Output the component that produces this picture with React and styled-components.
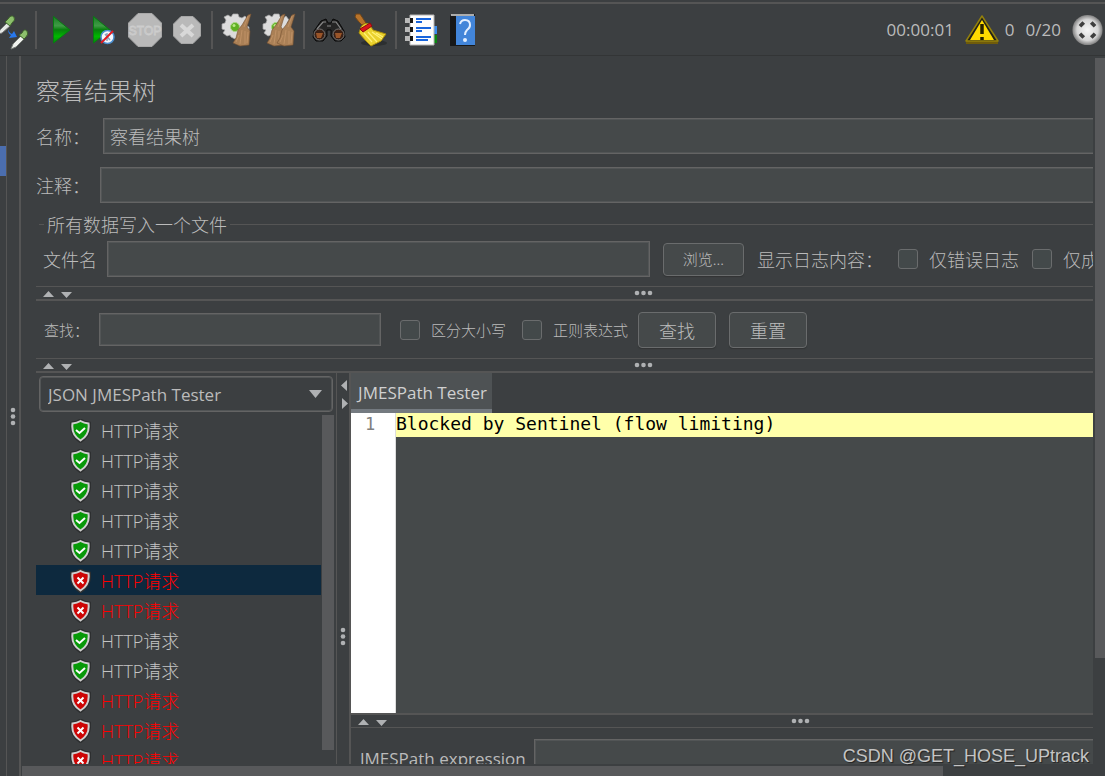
import React from 'react';
import styled, { createGlobalStyle, css } from 'styled-components';

const c = {
  bg: '#3c3f41',
  field: '#45494a',
  line: '#555555',
  border: '#646464',
  text: '#bbbbbb',
  icon: '#afb1b3',
  thumb: '#58595b',
};

const GlobalStyle = createGlobalStyle`
  *, *::before, *::after { box-sizing: border-box; }
  body {
    margin: 0;
    background: ${c.bg};
    color: ${c.text};
    font-family: 'Open Sans', 'Noto Sans CJK SC', sans-serif;
    font-size: 17px;
    line-height: 24px;
  }
  button, input, select { font: inherit; color: inherit; }
`;

const cjk = css`
  font-family: 'Noto Sans CJK SC', sans-serif;
  font-weight: 300;
`;

const Window = styled.div`
  position: relative;
  display: flex;
  flex-direction: column;
  height: 100vh;
  overflow: hidden;
`;

const Toolbar = styled.header`
  display: flex;
  align-items: center;
  flex: none;
  height: 54px;
  margin-top: 2px;
  border-top: 2px solid ${c.line};
  border-bottom: 1px solid #333536;
`;

const ToolButton = styled.button`
  display: flex;
  flex: none;
  align-items: center;
  justify-content: center;
  width: ${(p) => p.$width || 42}px;
  height: 38px;
  padding: 0;
  border: 0;
  background: none;
  svg { display: block; overflow: visible; }
`;

const Separator = styled.div`
  flex: none;
  width: 2px;
  height: 38px;
  margin: 0 3px;
  background: ${c.line};
`;

const Status = styled.div`
  display: flex;
  align-items: center;
  gap: 11px;
  margin-left: auto;
  padding-right: 2px;
`;

const StatusIcon = styled.span`
  display: flex;
  margin-right: ${(p) => p.$tight ? '-5px' : '0'};
`;

const Body = styled.div`
  display: flex;
  flex: 1;
  min-height: 0;
`;

const TreeEdge = styled.aside`
  flex: none;
  width: 7px;
  padding-top: 90px;
  border-right: 1px solid ${c.line};
`;

const TreeEdgeSelection = styled.div`
  height: 30px;
  background: #4b6eaf;
`;

const VSplitter = styled.div`
  position: relative;
  display: flex;
  flex: none;
  flex-direction: column;
  align-items: center;
  justify-content: center;
  width: 14px;
  border-right: 2px solid ${c.line};
`;

const InnerVSplitter = styled(VSplitter)`
  width: 15px;
  border-left: 1px solid ${c.line};
`;

const HSplitter = styled.div`
  position: relative;
  display: flex;
  flex: none;
  align-items: center;
  justify-content: center;
  height: 15px;
  border-top: ${(p) => (p.$flip ? 2 : 1)}px solid ${c.line};
  border-bottom: ${(p) => (p.$flip ? 1 : 2)}px solid ${c.line};
`;

const SplitArrows = styled.svg`
  position: absolute;
  left: ${(p) => (p.$vertical ? 2 : 7)}px;
  top: ${(p) => (p.$vertical ? 6 : 3)}px;
  fill: ${c.icon};
`;

const Dots = styled.svg`
  flex: none;
  fill: ${c.icon};
`;

const Viewport = styled.div`
  display: grid;
  grid-template-columns: minmax(0, 1fr) 10px;
  grid-template-rows: minmax(0, 1fr) 10px;
  gap: 2px;
  flex: 1;
  min-width: 0;
`;

const Clip = styled.main`
  overflow: hidden;
  padding-left: 15px;
`;

const Canvas = styled.div`
  display: flex;
  flex-direction: column;
  width: calc(100% + 157px);
  height: calc(100% + 136px);
`;

const ScrollTrack = styled.div`
  padding: ${(p) => (p.$horizontal ? '0 0 0 1px' : '2px 0 0')};
`;

const ScrollThumb = styled.div`
  width: ${(p) => p.$width || '100%'};
  height: ${(p) => p.$height || '100%'};
  background: ${c.thumb};
`;

const Title = styled.h1`
  ${cjk}
  margin: 16px 0 10px;
  font-size: 24px;
  line-height: 36px;
`;

const FormRow = styled.div`
  ${cjk}
  display: flex;
  align-items: center;
  flex: none;
  gap: ${(p) => p.$gap || 0}px;
  height: 36px;
  margin-bottom: ${(p) => p.$below || 0}px;
  padding: ${(p) => p.$padding || '0'};
  font-size: 18px;
`;

const Label = styled.label`
  flex: none;
  width: ${(p) => (p.$width ? `${p.$width}px` : 'auto')};
  white-space: nowrap;
`;

const TextField = styled.input`
  flex: ${(p) => (p.$width ? 'none' : 1)};
  width: ${(p) => p.$width || 0}px;
  min-width: 0;
  height: ${(p) => p.$height || 36}px;
  padding: 0 6px;
  border: 1px solid ${c.border};
  box-shadow: inset 0 0 0 1px #525556;
  border-radius: 0;
  background: ${c.field};
  outline: none;
`;

const Group = styled.fieldset`
  flex: none;
  min-width: 0;
  margin: 0;
  padding: 0;
  border: 0;
`;

const Legend = styled.legend`
  ${cjk}
  display: flex;
  align-items: center;
  gap: 3px;
  width: 100%;
  padding: 0 0 0 3px;
  font-size: 18px;
  line-height: 34px;
  &::before, &::after {
    content: '';
    width: 5px;
    height: 1px;
    background: ${c.line};
  }
  &::after { flex: 1; }
`;

const Button = styled.button`
  ${cjk}
  flex: none;
  width: ${(p) => p.$width}px;
  height: ${(p) => p.$height}px;
  padding: 0;
  border: 1px solid #6a6c6d;
  border-radius: 4px;
  background: ${c.field};
  box-shadow: 0 1px 1px #323435;
  font-size: ${(p) => p.$size || 18}px;
`;

const Check = styled.label`
  display: flex;
  flex: none;
  align-items: center;
  gap: 11px;
  font-size: ${(p) => p.$size || 18}px;
  white-space: nowrap;
`;

const CheckBox = styled.input.attrs({ type: 'checkbox' })`
  appearance: none;
  width: 20px;
  height: 20px;
  margin: 0;
  border: 1px solid #6a6c6d;
  border-radius: 3px;
  background: #43494a;
`;

const SearchRow = styled(FormRow)`
  height: 57px;
  padding-left: 8px;
  font-size: 15px;
`;

const Spacer = styled.span`
  flex: none;
  width: ${(p) => p.$width}px;
`;

const Panels = styled.div`
  display: flex;
  flex: 1;
  min-height: 0;
`;

const ResultPanel = styled.section`
  display: flex;
  flex: none;
  flex-direction: column;
  width: 300px;
`;

const SelectWrap = styled.div`
  position: relative;
  margin: 3px;
  svg {
    position: absolute;
    right: 11px;
    top: 14px;
    fill: ${c.icon};
    pointer-events: none;
  }
`;

const Select = styled.select`
  appearance: none;
  display: block;
  width: 100%;
  height: 36px;
  padding: 1px 30px 0 8px;
  border: 1px solid ${c.border};
  border-radius: 4px;
  box-shadow: inset 0 0 0 1px #525556;
  background: ${c.bg};
  outline: none;
`;

const ResultBody = styled.div`
  display: grid;
  grid-template-columns: 1fr 12px;
  gap: 1px;
  padding-right: 2px;
  flex: 1;
  min-height: 0;
`;

const ResultList = styled.ul`
  margin: 0;
  padding: 0;
  list-style: none;
  overflow: hidden;
`;

const ResultItem = styled.li`
  display: flex;
  align-items: center;
  gap: 10px;
  height: 30px;
  padding: 2px 0 0 34px;
  font-size: 18px;
  font-weight: 300;
  color: ${(p) => (p.$failed ? '#ff0000' : '#c4c4c4')};
  background: ${(p) => (p.$selected ? '#0d293e' : 'transparent')};
`;

const TesterPanel = styled.section`
  display: flex;
  flex: 1;
  flex-direction: column;
  min-width: 0;
`;

const Tabs = styled.div`
  display: flex;
  flex: none;
  height: 40px;
`;

const Tab = styled.button`
  width: 141px;
  padding: 4px 0 0 2px;
  border: 0;
  border-bottom: 4px solid #747a80;
  background: #4e5254;
  color: #d0d0d0;
  white-space: nowrap;
`;

const Editor = styled.div`
  display: flex;
  flex: 1;
  min-height: 0;
  background: ${c.field};
  font-family: 'DejaVu Sans Mono', monospace;
  font-size: 18px;
  line-height: 22px;
`;

const Gutter = styled.div`
  width: 45px;
  padding-left: 14px;
  border-right: 1px solid #dddddd;
  background: #ffffff;
  color: #808080;
  font-size: 17px;
`;

const CodeLine = styled.pre`
  flex: 1;
  height: 24px;
  margin: 0;
  background: #ffffaa;
  color: #000000;
  font: inherit;
`;

const Expression = styled.div`
  display: flex;
  flex: none;
  height: 172px;
  padding: 11px 0 0 9px;
`;

const ExpressionLabel = styled.label`
  width: 174px;
  line-height: 40px;
`;

const Watermark = styled.div`
  position: absolute;
  right: 16px;
  bottom: 8px;
  color: #c4c4c4;
  font-family: 'Liberation Sans', sans-serif;
  font-size: 18px;
  text-shadow: 1px 1px 1px #222222;
`;

const Dropper = () => (
  <svg width="32" height="34" viewBox="0 0 32 34">
    <path d="M-2 21L0 17L7 10L10 13L2 20Z" fill="#e5e8e5" stroke="#777" />
    <path d="M5 9L8 6Q11 1 14 4Q16 7 12 10L10 13Z" fill="#8cbf6c" stroke="#3e622c" />
    <path d="M8 16Q9 20 12 21L14 18L17 24L9 25L11 22Q8 21 8 16Z" fill="#2878ec" />
    <path d="M11 36L13 31L21 23L24 26L16 34Z" fill="#f1f3ef" stroke="#777d77" />
    <path d="M19 22L22 20Q24 15 27 18Q29 21 26 24L24 26Z" fill="#8cbf6c" stroke="#3e622c" />
  </svg>
);

const PlayShape = ({ id }) => (
  <>
    <defs>
      <linearGradient id={id} x1="0" y1="0" x2="0" y2="1">
        <stop offset="0" stopColor="#197d24" />
        <stop offset=".35" stopColor="#3f9b45" />
        <stop offset=".5" stopColor="#087f0d" />
        <stop offset=".75" stopColor="#00b800" />
        <stop offset="1" stopColor="#008b08" />
      </linearGradient>
    </defs>
    <path d="M.5 .5L17 14L.5 27Z" fill={`url(#${id})`} stroke="#087b12" />
  </>
);

const Play = () => (
  <svg width="17" height="28" viewBox="0 0 17 28"><PlayShape id="playFill" /></svg>
);

const PlayNoPause = () => (
  <svg width="20" height="28" viewBox="0 0 20 28">
    <PlayShape id="playNoPauseFill" />
    <circle cx="14.500" cy="21" r="6.500" fill="#f5f8fc" stroke="#4b8fd0" strokeWidth="1.500" />
    <path d="M12 18L17 24M14 17V25" stroke="#8ba5bd" strokeWidth="1.500" />
    <path d="M8 27L20 15" stroke="#e11b22" strokeWidth="2" />
  </svg>
);

const Stop = () => (
  <svg width="34" height="34" viewBox="0 0 34 34">
    <path d="M10 .5H24L33.500 10V24L24 33.500H10L.5 24V10Z" fill="#b9b9b9" stroke="#a8a8a8" />
    <text x="17" y="22" textAnchor="middle" fontFamily="Liberation Sans, sans-serif" fontSize="12" fill="#b9b9b9" stroke="#cdcdcd" strokeWidth=".8">STOP</text>
  </svg>
);

const Shutdown = () => (
  <svg width="28" height="28" viewBox="0 0 28 28">
    <path d="M8 .5H20L27.500 8V20L20 27.500H8L.5 20V8Z" fill="#b9b9b9" stroke="#a6a6a6" />
    <path d="M8 9L20 20M20 9L8 20" stroke="#d8d8d8" strokeWidth="4" />
  </svg>
);

const GearShape = () => (
  <>
    <path d="M12 1H17L18 4L21 5L24 3L27 7L25 10L26 13L28 14V18L25 19L23 22L20 24L17 23L14 26L10 24L9 22L6 23L2 20L4 17L1 16V11L4 10L5 7L3 4L7 2L10 4Z" fill="#dcdcdc" stroke="#a9a9a9" strokeWidth=".7" />
    <circle cx="14" cy="14" r="4.500" fill="#5fb022" stroke="#acd58b" />
    <circle cx="13" cy="12.500" r="1.500" fill="#b8ea85" />
  </>
);

const BroomShape = ({ x }) => (
  <g transform={`translate(${x} 0)`}>
    <path d="M15 2L18 1L14 14L17 18L16 32L7 33L0 30L3 25L5 17L9 12Z" fill="#aa8056" stroke="#765030" strokeWidth=".6" />
    <path d="M15 3L11 14M9 17L7 31M12 18V31M6 22L3 29M15 19L14 30" stroke="#c4966a" strokeWidth=".8" />
  </g>
);

const Clear = () => (
  <svg width="32" height="34" viewBox="0 0 32 34"><GearShape /><BroomShape x={12} /></svg>
);

const ClearAll = () => (
  <svg width="34" height="34" viewBox="0 0 34 34"><GearShape /><BroomShape x={5} /><BroomShape x={15} /></svg>
);

const Binoculars = () => (
  <svg width="34" height="26" viewBox="0 0 34 26">
    <path d="M2 14L9 4L14 2L16 6H19L21 2L26 4L32 14L33 20L29 24H23L19 19V13H15V19L11 24H4L1 20Z" fill="#252525" stroke="#080808" />
    <path d="M5 12L11 5L14 5M29 12L24 5L20 5M15 9H19" fill="none" stroke="#898989" strokeWidth="1.200" />
    <circle cx="7.500" cy="17.500" r="5.500" fill="#3a2015" stroke="#777" />
    <circle cx="26.500" cy="17.500" r="5.500" fill="#3a2015" stroke="#777" />
    <path d="M4 16H11L9 21H5ZM23 16H30L28 21H24Z" fill="#9a5529" />
  </svg>
);

const Broom = () => (
  <svg width="34" height="34" viewBox="0 0 34 34">
    <ellipse cx="20" cy="30" rx="13" ry="3" fill="#2c2f30" />
    <path d="M2 1L6 1L10 7L12 10L8 12L5 9L1 4Z" fill="#b8742b" stroke="#704518" />
    <path d="M7 14Q10 9 15 11L19 17L32 21L27 28L17 33L12 28L5 20Z" fill="#ead12d" stroke="#aa8d0b" />
    <path d="M10 20L18 29M14 19L23 29M18 19L28 26M22 20L29 24" stroke="#fff178" strokeWidth="1.200" />
    <path d="M6 16L16 10L18 13L9 19Z" fill="#d9161c" stroke="#920b10" />
  </svg>
);

const LogList = () => (
  <svg width="33" height="32" viewBox="0 0 33 32">
    <path d="M28 12H32V20H28Z" fill="#3b8dec" /><path d="M28 21H32V29H28Z" fill="#0a8611" />
    <path d="M5 1H29V31H5Z" fill="#fdfdfd" stroke="#b5b5b5" />
    {[4, 13, 22].map((y) => (
      <g key={y}>
        <path d={`M0 ${y}H5V${y + 5}H0Z`} fill="#bababa" />
        <path d={`M5 ${y}H8V${y + 5}H5Z`} fill="#161616" />
        <path d={`M11 ${y + 1}H26M11 ${y + 4}H${y === 22 ? 23 : 17}`} stroke="#1764dc" strokeWidth="2" />
      </g>
    ))}
  </svg>
);

const Help = () => (
  <svg width="26" height="34" viewBox="0 0 26 34">
    <path d="M0 3L2 1H25V33H0Z" fill="#171819" />
    <path d="M1 2H24" stroke="#dedede" strokeWidth="1.500" />
    <path d="M6 3H25V32H6Z" fill="#4285d9" />
    <path d="M10 11Q11 7 15 7Q20 7 20 12Q20 15 17 17Q15 19 15 22" fill="none" stroke="#e3efff" strokeWidth="2" />
    <circle cx="15" cy="27" r="2" fill="#e3efff" />
  </svg>
);

const Warning = () => (
  <svg width="34" height="30" viewBox="0 0 34 30">
    <path d="M1 25H33V29H1Z" fill="#6f5b0a" />
    <path d="M17 1L33 26H1Z" fill="#222218" stroke="#93800c" strokeWidth="1.500" strokeLinejoin="round" />
    <path d="M17 5L29 25H5Z" fill="#ffda00" />
    <path d="M17 9V19M17 22V25" stroke="#282200" strokeWidth="3.500" />
  </svg>
);

const Threads = () => (
  <svg width="31" height="32" viewBox="0 0 32 34">
    <defs>
      <radialGradient id="ball">
        <stop offset="0" stopColor="#f5f5f5" /><stop offset=".7" stopColor="#d6d6d6" /><stop offset="1" stopColor="#808080" />
      </radialGradient>
    </defs>
    <circle cx="16" cy="17" r="16" fill="url(#ball)" />
    <path d="M8 13L12 9M20 9L24 13M8 21L12 25M20 25L24 21" stroke="#3e3e3e" strokeWidth="4" />
  </svg>
);

const Shield = ({ failed }) => (
  <svg width="21" height="24" viewBox="0 0 21 24" aria-hidden="true">
    <path d="M10.500 1.500Q14 4 19 4.500Q20 16 10.500 22Q1 16 2 4.500Q7 4 10.500 1.500Z" fill="none" stroke="#2d2f30" strokeWidth="4" />
    <path d="M10.500 2Q14 4 18.500 4.500Q20 16 10.500 21.500Q1 16 2.500 4.500Q7 4 10.500 2Z" fill={failed ? '#cd0505' : '#079908'} stroke="#cfcfcf" strokeWidth="2" />
    <path d={failed ? 'M7.500 8.500L13.500 14.500M13.500 8.500L7.500 14.500' : 'M6 11L9.500 14L15 9'} fill="none" stroke="#fff" strokeWidth="2" />
  </svg>
);

const HDots = () => (
  <Dots width="19" height="6" viewBox="0 0 19 6">
    <circle cx="3" cy="3" r="2.300" /><circle cx="9.500" cy="3" r="2.300" /><circle cx="16" cy="3" r="2.300" />
  </Dots>
);

const VDots = () => (
  <Dots width="6" height="19" viewBox="0 0 6 19">
    <circle cx="3" cy="3" r="2.300" /><circle cx="3" cy="9.500" r="2.300" /><circle cx="3" cy="16" r="2.300" />
  </Dots>
);

const HorizontalSplitter = ({ flip }) => (
  <HSplitter $flip={flip} role="separator">
    <SplitArrows width="30" height="8" viewBox="0 0 30 8">
      <path d="M0 7L5.500 1L11 7ZM18 2H29L23.500 8Z" />
    </SplitArrows>
    <HDots />
  </HSplitter>
);

const tools = [
  [['启动', Play], ['不停顿开始', PlayNoPause], ['停止', Stop], ['关闭', Shutdown]],
  [['清除', Clear], ['清除全部', ClearAll]],
  [['搜索', Binoculars], ['重置搜索', Broom]],
  [['函数助手', LogList], ['帮助', Help]],
];

const results = [true, true, true, true, true, false, false, true, true, false, false, false];

export default function App() {
  return (
    <Window>
      <GlobalStyle />
      <Toolbar>
        <ToolButton $width={32} aria-label="切换"><Dropper /></ToolButton>
        {tools.map((group, i) => (
          <React.Fragment key={i}>
            <Separator />
            {group.map(([name, Icon]) => (
              <ToolButton key={name} aria-label={name}><Icon /></ToolButton>
            ))}
          </React.Fragment>
        ))}
        <Status>
          <span>00:00:01</span>
          <StatusIcon $tight><Warning /></StatusIcon>
          <span>0</span>
          <span>0/20</span>
          <StatusIcon><Threads /></StatusIcon>
        </Status>
      </Toolbar>

      <Body>
        <TreeEdge><TreeEdgeSelection /></TreeEdge>
        <VSplitter role="separator"><VDots /></VSplitter>
        <Viewport>
          <Clip>
            <Canvas>
              <Title>察看结果树</Title>
              <FormRow $below={13}>
                <Label htmlFor="name" $width={67}>名称：</Label>
                <TextField id="name" defaultValue="察看结果树" />
              </FormRow>
              <FormRow $below={4}>
                <Label htmlFor="comment" $width={64}>注释：</Label>
                <TextField id="comment" />
              </FormRow>
              <Group>
                <Legend>所有数据写入一个文件</Legend>
                <FormRow $gap={13} $below={9} $padding="0 97px 0 7px">
                  <Label htmlFor="file" $width={51}>文件名</Label>
                  <TextField id="file" />
                  <Button $width={81} $height={33} $size={15}>浏览...</Button>
                  <Label as="span" $width={128}>显示日志内容：</Label>
                  <Check><CheckBox />仅错误日志</Check>
                  <Check><CheckBox />仅成功日志</Check>
                </FormRow>
              </Group>
              <HorizontalSplitter />
              <SearchRow>
                <Label htmlFor="search" $width={55}>查找：</Label>
                <TextField id="search" $width={282} $height={33} />
                <Spacer $width={19} />
                <Check $size={15}><CheckBox />区分大小写</Check>
                <Spacer $width={16} />
                <Check $size={15}><CheckBox />正则表达式</Check>
                <Spacer $width={10} />
                <Button $width={78} $height={36}>查找</Button>
                <Spacer $width={13} />
                <Button $width={78} $height={36}>重置</Button>
              </SearchRow>
              <HorizontalSplitter />
              <Panels>
                <ResultPanel>
                  <SelectWrap>
                    <Select aria-label="查看方式" defaultValue="jmes">
                      <option value="jmes">JSON JMESPath Tester</option>
                    </Select>
                    <svg width="13" height="8" viewBox="0 0 13 8"><path d="M0 0H13L6.500 8Z" /></svg>
                  </SelectWrap>
                  <ResultBody>
                    <ResultList>
                      {results.map((ok, i) => (
                        <ResultItem key={i} $failed={!ok} $selected={i === 5}>
                          <Shield failed={!ok} />
                          HTTP请求
                        </ResultItem>
                      ))}
                    </ResultList>
                    <ScrollThumb $height="69%" />
                  </ResultBody>
                </ResultPanel>
                <InnerVSplitter role="separator">
                  <SplitArrows $vertical width="10" height="30" viewBox="0 0 10 30">
                    <path d="M8 1V12L2 6.500ZM3 19V30L9 24.500Z" />
                  </SplitArrows>
                  <VDots />
                </InnerVSplitter>
                <TesterPanel>
                  <Tabs><Tab>JMESPath Tester</Tab></Tabs>
                  <Editor>
                    <Gutter>1</Gutter>
                    <CodeLine>Blocked by Sentinel (flow limiting)</CodeLine>
                  </Editor>
                  <HorizontalSplitter flip />
                  <Expression>
                    <ExpressionLabel htmlFor="expression">JMESPath expression</ExpressionLabel>
                    <TextField id="expression" />
                  </Expression>
                </TesterPanel>
              </Panels>
            </Canvas>
          </Clip>
          <ScrollTrack><ScrollThumb $height="85%" /></ScrollTrack>
          <ScrollTrack $horizontal><ScrollThumb $width="86%" /></ScrollTrack>
        </Viewport>
      </Body>
      <Watermark>CSDN @GET_HOSE_UPtrack</Watermark>
    </Window>
  );
}
